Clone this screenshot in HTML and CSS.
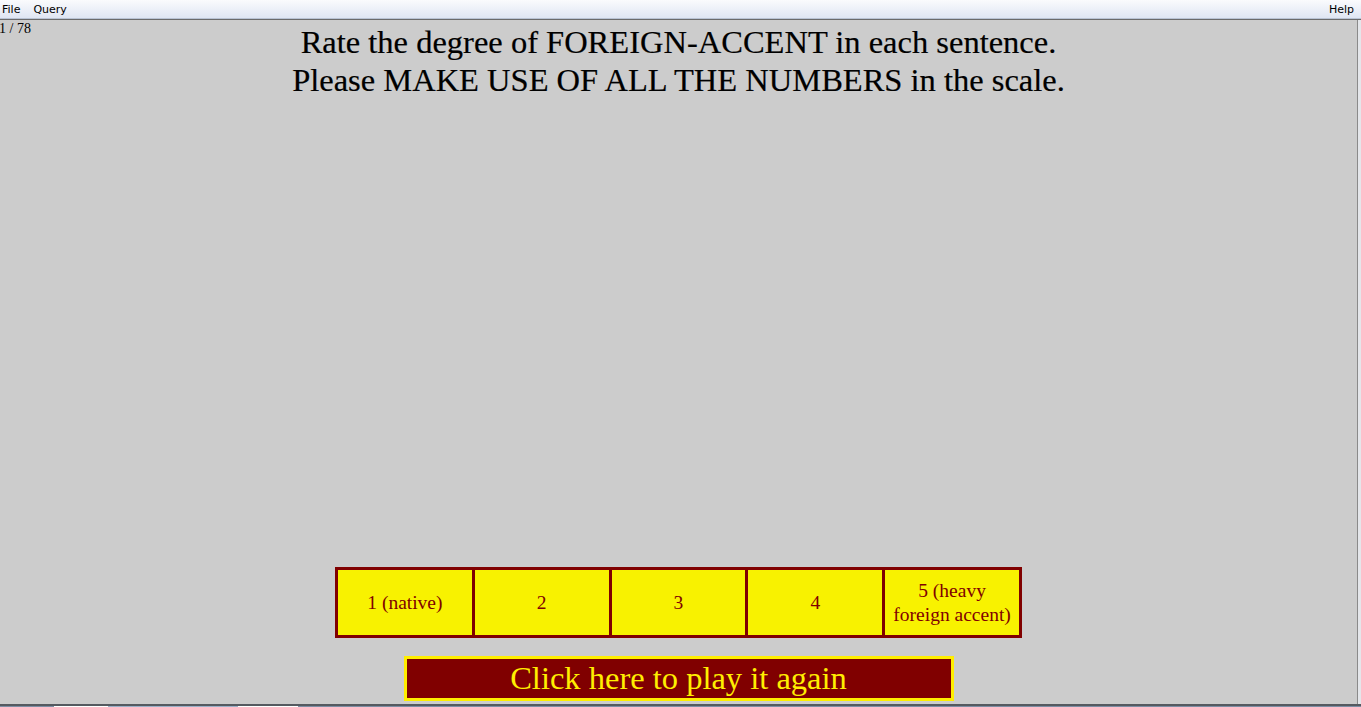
FILE: index.html
```html
<!DOCTYPE html>
<html>
<head>
<meta charset="utf-8">
<link rel="stylesheet" href="styles.css">
</head>
<body>
<div class="menubar">
  <div class="menu-left"><span class="mi">File</span><span class="mi">Query</span></div>
  <span class="mi help">Help</span>
</div>
<div class="frame">
  <div class="content">
    <div class="counter">1 / 78</div>
    <div class="title">Rate the degree of FOREIGN-ACCENT in each sentence.<br>Please MAKE USE OF ALL THE NUMBERS in the scale.</div>
    <div class="spacer"></div>
    <div class="scale">
      <div class="cell">1 (native)</div>
      <div class="cell">2</div>
      <div class="cell">3</div>
      <div class="cell">4</div>
      <div class="cell">5 (heavy<br>foreign accent)</div>
    </div>
    <div class="play">Click here to play it again</div>
  </div>
  <div class="rightedge"></div>
</div>
<div class="taskbar">
  <span class="tb t1"></span><span class="tb t2"></span><span class="tb t3"></span><span class="tb t4"></span><span class="tb t5"></span><span class="tb t6"></span>
</div>
</body>
</html>
```
FILE: styles.css
```css
html, body {
  margin: 0;
  padding: 0;
  width: 1361px;
  height: 707px;
  overflow: hidden;
  background: #cccccc;
}
body {
  display: flex;
  flex-direction: column;
  font-family: "Liberation Serif", "Times New Roman", serif;
}
.menubar {
  height: 18px;
  flex: none;
  display: flex;
  justify-content: space-between;
  align-items: center;
  background: linear-gradient(#fafbfd, #dfe6f3);
  border-bottom: 1px solid #b9c3d4;
  font-family: "DejaVu Sans", "Liberation Sans", sans-serif;
  font-size: 11px;
  color: #000;
}
.menu-left { display: flex; }
.mi { padding: 0 3px; }
.menu-left .mi:first-child { padding-left: 2px; padding-right: 10px; }
.help { padding-right: 7px; }
.frame {
  flex: 1;
  display: flex;
  border-top: 1px solid #6b6b6b;
  border-bottom: 2px solid #555a60;
}
.content {
  flex: 1;
  display: flex;
  flex-direction: column;
  align-items: center;
  position: relative;
  background: #cccccc;
}
.rightedge {
  width: 3px;
  background: #e4e6ea;
  border-left: 1px solid #8a8a8a;
}
.counter {
  position: absolute;
  left: -1px;
  top: 1px;
  font-size: 14px;
  line-height: 16px;
  color: #000;
}
.title {
  margin-top: 3px;
  font-size: 32.5px;
  line-height: 38px;
  text-align: center;
  color: #000;
  -webkit-text-stroke: 0.2px #000;
}
.spacer { flex: 1; }
.scale {
  display: flex;
  border: 3px solid #800000;
  background: #800000;
  gap: 3px;
}
.cell {
  width: 133.8px;
  height: 65px;
  background: #f8f200;
  color: #800000;
  font-size: 19.5px;
  line-height: 24px;
  display: flex;
  align-items: center;
  justify-content: center;
  text-align: center;
}
.play {
  margin-top: 18px;
  margin-bottom: 3px;
  width: 544px;
  height: 39px;
  border: 3px solid #ffee00;
  background: #800000;
  color: #ffee00;
  font-size: 32.5px;
  line-height: 39px;
  text-align: center;
}
.taskbar {
  height: 1px;
  flex: none;
  display: flex;
  background: #7d8ea4;
}
.tb { height: 1px; }
.t1 { width: 54px; background: #7d8ea4; }
.t2 { width: 54px; background: #ffffff; }
.t3 { width: 130px; background: #9bb0c8; }
.t4 { width: 60px; background: #ffffff; }
```
